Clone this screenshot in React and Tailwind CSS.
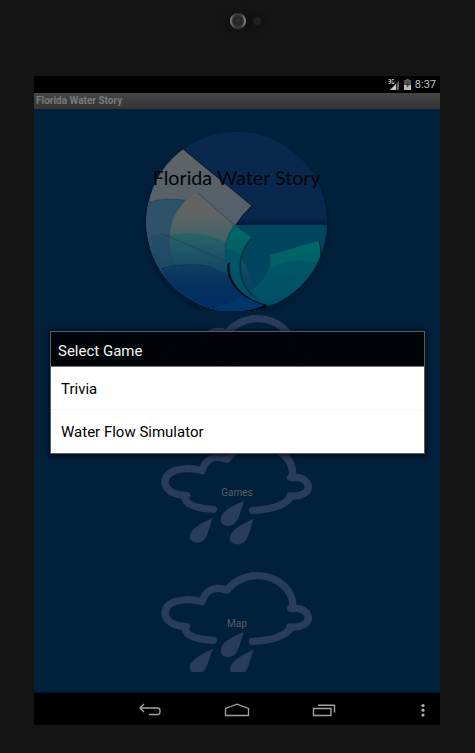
import React from "react";

function Camera() {
  return (
    <svg className="ml-3" width="60" height="32" viewBox="0 0 60 32" aria-hidden="true">
      <defs>
        <radialGradient id="halo">
          <stop offset="0" stopColor="#0e0e0e" />
          <stop offset="0.6" stopColor="#121212" />
          <stop offset="1" stopColor="#141414" />
        </radialGradient>
        <linearGradient id="ring">
          <stop offset="0" stopColor="#777777" />
          <stop offset="0.3" stopColor="#383838" />
          <stop offset="0.7" stopColor="#383838" />
          <stop offset="1" stopColor="#808080" />
        </linearGradient>
      </defs>
      <ellipse cx="30" cy="17" rx="28" ry="15" fill="url(#halo)" />
      <circle cx="25" cy="17" r="7" fill="#303030" stroke="url(#ring)" strokeWidth="2" />
      <circle cx="25" cy="17" r="4" fill="#272727" stroke="#242424" />
      <circle cx="25" cy="16" r="2" fill="#333333" />
      <circle cx="44" cy="17" r="4" fill="#1f1f1f" />
    </svg>
  );
}

function StatusBar() {
  return (
    <div className="flex h-[17px] items-center justify-end gap-1 bg-black pr-1 text-[#c4c4c4]">
      <svg width="12" height="12" viewBox="0 0 12 12" role="img" aria-label="3G signal">
        <path d="M2 11 L11 2 V11 Z" fill="#666666" />
        <path d="M2 11 L8 5 V11 Z" fill="#c8c8c8" />
        <path d="M8.5 4 V11" stroke="#333333" />
        <path d="M0.5 0.5 H2.5 V4.5 H0.5 M0.5 2.5 H2.5 M6 0.5 H4 V4.5 H6 V2.5" fill="none" stroke="#aaaaaa" />
      </svg>
      <svg width="7" height="11" viewBox="0 0 7 11" role="img" aria-label="Battery charging">
        <path d="M2 0 H5 V1 H7 V11 H0 V1 H2 Z" fill="#555555" />
        <path d="M0 6 H7 V11 H0 Z" fill="#b8b8b8" />
        <path d="M4.5 2.5 L1.8 6.3 H3.5 L2.7 9 L5.5 5.3 H3.7 Z" fill="#222222" />
      </svg>
      <span className="pt-px text-[11px] leading-4">8:37</span>
    </div>
  );
}

function Logo() {
  return (
    <svg
      className="-mb-4 mt-[11px] h-[200px] w-[205px] shrink-0"
      viewBox="0 0 615 600"
      role="img"
      aria-label="Florida Water Story"
    >
      <defs>
        <clipPath id="disc">
          <path d="M0 35 H615 V573 H0 Z" />
        </clipPath>
        <clipPath id="round">
          <circle cx="305" cy="306" r="271" />
        </clipPath>
        <linearGradient id="sheet" gradientUnits="userSpaceOnUse" x1="0" y1="90" x2="0" y2="250">
          <stop offset="0" stopColor="#606467" />
          <stop offset="1" stopColor="#566068" />
        </linearGradient>
        <linearGradient id="band" gradientUnits="userSpaceOnUse" x1="0" y1="240" x2="0" y2="460">
          <stop offset="0" stopColor="#2b5268" />
          <stop offset="0.4" stopColor="#31536a" />
          <stop offset="1" stopColor="#1d4663" />
        </linearGradient>
        <linearGradient id="inner" gradientUnits="userSpaceOnUse" x1="0" y1="218" x2="0" y2="450">
          <stop offset="0" stopColor="#656261" />
          <stop offset="0.25" stopColor="#616463" />
          <stop offset="0.5" stopColor="#4b6367" />
          <stop offset="1" stopColor="#1d5668" />
        </linearGradient>
        <linearGradient id="wave" gradientUnits="userSpaceOnUse" x1="0" y1="340" x2="0" y2="480">
          <stop offset="0" stopColor="#2a6468" />
          <stop offset="1" stopColor="#0c4264" />
        </linearGradient>
        <linearGradient id="deep" gradientUnits="userSpaceOnUse" x1="0" y1="432" x2="0" y2="573">
          <stop offset="0" stopColor="#113f62" />
          <stop offset="0.4" stopColor="#05325f" />
          <stop offset="1" stopColor="#002c66" />
        </linearGradient>
        <linearGradient id="curl" x1="0" y1="0" x2="0" y2="1">
          <stop offset="0" stopColor="#006a67" />
          <stop offset="0.5" stopColor="#005b66" />
          <stop offset="1" stopColor="#004a66" />
        </linearGradient>
        <linearGradient id="horizon" x1="0" y1="0" x2="0" y2="1">
          <stop offset="0" stopColor="#09284e" />
          <stop offset="1" stopColor="#041a3a" />
        </linearGradient>
        <filter id="soft" x="-20%" y="-20%" width="140%" height="140%">
          <feGaussianBlur stdDeviation="9" />
        </filter>
      </defs>
      <g clipPath="url(#disc)">
        <circle cx="305" cy="318" r="266" fill="#001226" filter="url(#soft)" />
        <g clipPath="url(#round)">
          <rect x="30" y="30" width="550" height="550" fill="#09284e" />
          <rect x="290" y="290" width="290" height="25" fill="url(#horizon)" />
          <rect x="270" y="315" width="310" height="265" fill="#004560" />
          <path d="M147 88 L353 258 Q326 284 304 314 L250 314 Z" fill="#031a36" />
          <path d="M143 88 L349 257 Q320 284 298 318 C250 410 285 500 390 556 L350 580 H30 V88 Z" fill="url(#sheet)" />
          <path d="M30 249 Q90 231 152 241 L290 320 L280 580 H30 Z" fill="url(#band)" />
          <path d="M43 246 Q95 232 152 241" fill="none" stroke="#1c3c56" strokeWidth="2" />
          <path d="M50 350 Q80 340 105 345 L125 440 Q100 440 78 447 Q50 400 50 350 Z" fill="#1c4a66" opacity="0.5" />
          <path d="M78 447 C120 432 160 432 200 436 L280 580 H150 Z" fill="url(#deep)" />
          <path
            d="M187 218 L298 315 C250 405 285 500 390 556 L255 566 C170 520 105 450 105 350 C105 295 135 245 187 218 Z"
            fill="url(#inner)"
          />
          <path
            d="M105 345 C170 332 265 342 316 405 L390 556 L255 566 C170 520 105 450 105 345 Z"
            fill="url(#wave)"
          />
          <path d="M124 438 C180 428 235 438 280 464 C298 508 336 538 390 556 L255 580 C190 535 142 490 124 438 Z" fill="url(#deep)" />
          <path d="M78 447 C120 432 180 430 230 441" fill="none" stroke="#0b304c" strokeWidth="2" />
          <path d="M124 438 C142 490 190 535 255 566" fill="none" stroke="#0a4a70" strokeWidth="2" opacity="0.5" />
          <path d="M240 562 Q300 545 345 518 L395 556 L340 580 H250 Z" fill="#003668" />
          <path d="M187 218 L298 315 M78 340 L284 428" fill="none" stroke="#2b3b44" strokeWidth="2" />
          <path
            d="M298 315 L351 355 C303 400 305 480 350 525 Q368 543 392 553 C325 540 272 485 271 410 C271 370 282 340 298 315 Z"
            fill="url(#curl)"
          />
          <path d="M271 385 C290 388 305 396 315 408 C314 450 325 500 350 525 Q368 543 392 553 C325 540 272 485 271 385 Z" fill="#004f66" opacity="0.5" />
          <path d="M351 355 C303 400 305 480 350 525" fill="none" stroke="#003348" strokeWidth="5" />
          <path d="M298 315 C268 360 266 400 276 432" fill="none" stroke="#004d70" strokeWidth="3" />
          <path
            d="M406 405 L552 362 C563 405 555 430 542 450 C505 515 450 548 390 560 L345 514 C385 490 411 448 406 405 Z"
            fill="url(#curl)"
          />
          <path d="M398 452 C440 420 490 416 553 428 C520 505 450 548 390 558 L345 514 Q382 490 398 452 Z" fill="#005066" opacity="0.6" />
          <path
            d="M284 427 C276 482 318 533 392 555 C316 537 272 486 278 432 Z"
            fill="#000a14"
            stroke="#000a14"
            strokeWidth="1"
          />
          <path d="M552 362 C563 405 555 430 542 450 C505 515 450 548 390 560" fill="none" stroke="#00252d" strokeWidth="3" />
          <path d="M390 552 C370 568 340 572 315 574 L345 580 L400 562 Z" fill="#00060c" />
        </g>
      </g>
      <text x="305" y="196" textAnchor="middle" fill="#020508" fontSize="59" fontFamily="Lato, sans-serif">
        Florida Water Story
      </text>
    </svg>
  );
}

function CloudButton({ label, className }) {
  return (
    <button type="button" className={`grid w-[152px] shrink-0 items-start justify-items-center ${className}`}>
      <svg
        className="col-start-1 row-start-1 h-[106px] w-[152px]"
        viewBox="33 36 456 318"
        aria-hidden="true"
      >
        <path
          fill="none"
          stroke="#293c5d"
          strokeLinecap="round"
          strokeLinejoin="round"
          strokeWidth="22"
          d="M190 241 Q112 236 105 208 L110 199 C70 200 45 180 45 160 C45 122 105 111 156 125 C166 90 196 76 231 91 C252 62 288 47 323 47 C382 47 434 91 428 146 L422 145 C458 141 475 159 475 174 C475 191 452 204 420 201 L419 208 C397 233 361 242 308 244"
        />
        <g fill="#293c5d">
          <path d="M282 216 Q219 240 213 265 C209 283 221 292 236 291 C266 290 269 250 282 216 Z" />
          <path d="M189 266 Q126 294 120 316 C116 334 128 342 143 341 C173 340 174 300 189 266 Z" />
          <path d="M311 269 Q248 297 241 320 C236 339 249 347 265 346 C296 344 297 304 311 269 Z" />
        </g>
      </svg>
      <span className="col-start-1 row-start-1 pt-11 text-[10px] leading-4 text-[#5c5d5f]">{label}</span>
    </button>
  );
}

function GameDialog() {
  return (
    <div
      role="dialog"
      aria-labelledby="dialog-title"
      className="absolute left-4 right-[15px] top-[222px] border border-[#5c5c5c] shadow-[0_1px_5px_1px_rgba(0,0,0,0.7)]"
    >
      <h2
        id="dialog-title"
        className="h-[35px] border-b border-[#777777] bg-[#000105]/95 px-[7px] pt-[9px] text-[15px] leading-5 text-[#f3f3f3]"
      >
        Select Game
      </h2>
      <button type="button" className="block h-[43px] w-full border-b border-[#f4f4f4] bg-white px-[10px] pt-0.5 text-left text-[15px] text-black">
        Trivia
      </button>
      <button type="button" className="block h-[43px] w-full bg-white px-[10px] pt-0.5 text-left text-[15px] text-black">
        Water Flow Simulator
      </button>
    </div>
  );
}

function NavBar() {
  return (
    <nav className="grid h-8 grid-cols-[1fr_87px_87px_87px_1fr] items-center bg-black pt-px">
      <button type="button" aria-label="Back" className="col-start-2 justify-self-center">
        <svg width="22" height="14" viewBox="0 0 22 14" fill="none" stroke="#a2a2a2" strokeWidth="1.3">
          <path d="M5 1 L1 5 L5 9 M1 5 H18.5 Q21 5 21 7.5 V9 Q21 11.5 18.5 11.5 H10" />
        </svg>
      </button>
      <button type="button" aria-label="Home" className="justify-self-center">
        <svg width="26" height="14" viewBox="0 0 26 14" fill="none" stroke="#a2a2a2" strokeWidth="1.3">
          <path d="M1.5 12.5 V5.5 L13 1.2 L24.5 5.5 V12.5 Z" />
        </svg>
      </button>
      <button type="button" aria-label="Recent apps" className="justify-self-center">
        <svg width="24" height="14" viewBox="0 0 24 14" fill="none" stroke="#a2a2a2" strokeWidth="1.4">
          <path d="M1.5 5.5 H19 V12.5 H1.5 Z M6 2.2 H22.5 V9.5" />
        </svg>
      </button>
      <button type="button" aria-label="Menu" className="mr-[14px] justify-self-end">
        <svg width="6" height="14" viewBox="0 0 6 14" fill="#b0b0b0">
          <circle cx="3" cy="2.5" r="1.6" />
          <circle cx="3" cy="7.2" r="1.6" />
          <circle cx="3" cy="12" r="1.6" />
        </svg>
      </button>
    </nav>
  );
}

export default function App() {
  return (
    <div className="flex min-h-screen flex-col bg-[#141414] pb-7 pl-[34px] pr-[35px] font-[Roboto,sans-serif]">
      <div className="flex h-[76px] items-start justify-center pt-1">
        <Camera />
      </div>
      <div className="flex grow flex-col">
        <StatusBar />
        <h1 className="h-4 bg-linear-to-b from-[#444444] to-[#363636] pl-[2px] text-[10px] font-bold leading-4 text-[#7a7a7a]">
          Florida Water Story
        </h1>
        <main className="relative flex grow flex-col items-center border-b border-[#001329] bg-[#00203c]">
          <Logo />
          <div className="flex flex-col items-center pt-[11px]">
            <CloudButton label="Information" className="h-[126px]" />
            <CloudButton label="Games" className="h-[131px]" />
            <CloudButton label="Map" className="h-[100px] overflow-hidden" />
          </div>
          <GameDialog />
        </main>
        <NavBar />
      </div>
    </div>
  );
}
